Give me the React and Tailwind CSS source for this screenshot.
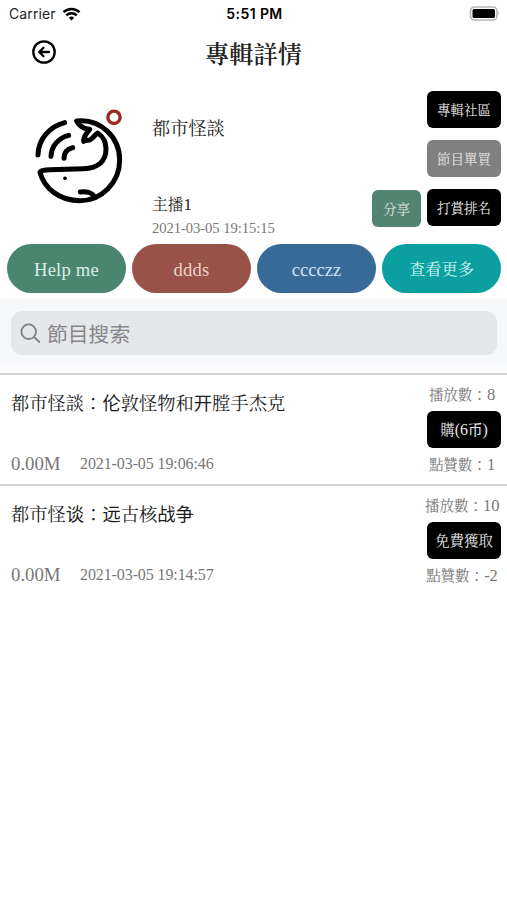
import React from 'react';

const serif = "font-['Liberation_Serif','Noto_Serif_CJK_TC','Noto_Sans_CJK_TC',serif]";

function StatusBar() {
  return (
    <div className="flex h-[27px] items-center justify-between pl-[9px] pr-[7px] font-['Inter','Liberation_Sans',sans-serif] text-black">
      <div className="flex w-[120px] items-center gap-[6px] text-[14px] font-normal tracking-[0.1px] text-[#222]">
        <span>Carrier</span>
        <svg width="19" height="14" viewBox="0 0 18 14" fill="none" stroke="#000" strokeWidth="2.5">
          <path d="M1 5.2a11.4 11.4 0 0 1 16 0" />
          <path d="M3.8 8.4a7.4 7.4 0 0 1 10.4 0" />
          <path d="M9 13.5 6.3 10.7a4 4 0 0 1 5.4 0z" fill="#000" stroke="none" />
        </svg>
      </div>
      <div className="text-[14px] font-semibold tracking-[0.4px]">5:51 PM</div>
      <div className="flex w-[120px] justify-end">
        <svg width="31" height="15" viewBox="0 0 31 15">
          <rect x="1.5" y="1" width="26.5" height="13" rx="4" fill="#fff" stroke="#b5b5b5" strokeWidth="1.6" />
          <rect x="3.5" y="3" width="22.5" height="9" rx="1.5" fill="#000" />
          <path d="M29.2 5.3q1.8 2 0 4z" fill="#b5b5b5" />
        </svg>
      </div>
    </div>
  );
}

function Logo() {
  return (
    <svg className="h-[120px] w-[120px] shrink-0" viewBox="0 0 360 360" fill="none" stroke="#000" strokeWidth="15" strokeLinecap="round" strokeLinejoin="round">
      <path d="M170 78C243 70 299 128 299 195C299 262 245 317 180 317C119 317 73 281 60 232C62 226 75 225 90 224L190 221C237 220 258 196 258 162C258 142 249 124 233 114C226 117 222 128 211 134C205 137 198 134 191 139C190 122 202 113 209 103C192 102 178 93 170 78Z" />
      <path d="M54 180C55 132 90 94 134 83" />
      <path d="M93 184C94 152 116 129 146 121" />
      <path d="M132 190C132 173 143 162 158 158" />
      <path d="M181 291C199 288 216 293 222 303" />
      <circle cx="135" cy="250" r="5.5" fill="#000" stroke="none" />
      <circle cx="282" cy="67" r="18.5" stroke="#9a2a20" strokeWidth="10" />
    </svg>
  );
}

function Button({ children, className = 'w-[74px] bg-black pt-[4px] text-[13.5px]' }) {
  return (
    <div className={`flex h-[37px] items-center justify-center rounded-[6px] text-[#e6e6e6] ${className}`}>
      {children}
    </div>
  );
}

function Pill({ children, className }) {
  return (
    <div className={`flex h-[49px] flex-1 items-center justify-center rounded-full ${className}`}>{children}</div>
  );
}

// Simplified-only characters fall back to a sans face.
function Sans({ children }) {
  return <span className="font-['Noto_Sans_CJK_SC',sans-serif]">{children}</span>;
}

function Row({ title, date, plays, action, likes }) {
  return (
    <div className="flex h-[111px] justify-between border-t-2 border-[#d2d3d5] pl-[11px] pr-[6px]">
      <div className="flex flex-col justify-between pb-[8px] pt-[13px]">
        <div className="text-[18.3px] leading-[28px] text-[#1c1c1c]">{title}</div>
        <div className="flex items-center leading-[24px] text-[#777]">
          <span className="w-[69px] text-[18.8px]">0.00M</span>
          <span className="text-[16px] tracking-[-0.1px]">{date}</span>
        </div>
      </div>
      <div className="flex w-[76px] flex-col items-end whitespace-nowrap pt-[10px] text-[14.5px] leading-[20px] text-[#777]">
        <div className="h-[20px] w-full pr-[2px] text-center">播放數：<span className="text-[16.5px]">{plays}</span></div>
        <Button className="mb-[7px] mt-[6px] w-[74px] shrink-0 bg-black text-[14.5px]">{action}</Button>
        <div className="h-[20px] w-full pr-[2px] text-center">點贊數：<span className="text-[16.5px]">{likes}</span></div>
      </div>
    </div>
  );
}

export default function App() {
  return (
    <div className={`h-[900px] w-[507px] overflow-hidden bg-white font-normal ${serif}`}>
      <StatusBar />
      <header className="grid h-[52px] grid-cols-[80px_1fr_80px] items-center">
        <svg className="ml-[31px] -mt-[2px]" width="26" height="26" viewBox="0 0 26 26" fill="none" stroke="#000" strokeWidth="2.3" strokeLinecap="round" strokeLinejoin="round">
          <circle cx="13" cy="13" r="10.7" />
          <path d="M18 13H8.5M12.5 8.7 8.2 13l4.3 4.3" />
        </svg>
        <h1 className="pt-[4px] text-center text-[24.3px] font-semibold text-[#222]">專輯詳情</h1>
      </header>

      <section className="flex h-[165px] pl-[20px] pr-[6px] pt-[12px]">
        <div className="pt-[4px]">
          <Logo />
        </div>
        <div className="flex flex-1 flex-col pl-[12px] pt-[24px] text-[#222]">
          <div className="h-[28px] text-[18.2px] leading-[28px]">都市怪談</div>
          <div className="mt-[50px] h-[24px] text-[15.7px] leading-[24px]">主播<span className="text-[17px]">1</span></div>
          <div className="text-[14.6px] leading-[22px] tracking-[-0.05px] text-[#777]">2021-03-05 19:15:15</div>
        </div>
        <div className="flex items-end gap-[6px] pb-[18px]">
          <Button className="-mb-px w-[49px] bg-[#538471] pt-[4px] text-[13.5px]">分享</Button>
          <div className="flex flex-col gap-[12px]">
            <Button>專輯社區</Button>
            <Button className="w-[74px] bg-[#808080] pt-[4px] text-[13.5px]">節目單買</Button>
            <Button>打賞排名</Button>
          </div>
        </div>
      </section>

      <nav className="flex gap-[6px] pl-[7px] pr-[6px] text-[18.6px]">
        <Pill className="bg-[#4a8570] pt-[2px] tracking-[0.2px] text-[#d8eee5]">Help me</Pill>
        <Pill className="bg-[#985248] pt-[2px] tracking-[0.2px] text-[#f0d3cb]">ddds</Pill>
        <Pill className="bg-[#386a98] pt-[2px] text-[#cfe4f5]">cccczz</Pill>
        <Pill className="bg-[#0b9fa0] pt-[4px] text-[16.2px] text-[#d2f6f3]">查看更多</Pill>
      </nav>

      <div className="mt-[6px] h-[74px] bg-gradient-to-b from-[#f7f8fa] from-85% to-[#fdfdfe] pl-[11px] pr-[10px] pt-[12px]">
        <div className="flex h-[44px] items-center rounded-[11px] bg-[#e6e7e9] pl-[9px] pt-px font-['Noto_Sans_CJK_TC',sans-serif] text-[20.8px] text-[#85868a]">
          <svg className="mr-[6px]" width="21" height="21" viewBox="0 0 21 21" fill="none" stroke="#808186" strokeWidth="1.8" strokeLinecap="round">
            <circle cx="8.7" cy="8.7" r="7.3" />
            <path d="m14 14 5.4 5" />
          </svg>
          節目搜索
        </div>
      </div>

      <Row
        title={<>都市怪談：<Sans>伦</Sans>敦怪物和<Sans>开</Sans>膛手杰克</>}
        date="2021-03-05 19:06:46"
        plays="8"
        action={<span>購<span className="text-[16px]">(6</span><Sans>币</Sans><span className="text-[16px]">)</span></span>}
        likes="1"
      />
      <Row
        title={<>都市怪<Sans>谈</Sans>：<Sans>远</Sans>古核<Sans>战争</Sans></>}
        date="2021-03-05 19:14:57"
        plays="10"
        action="免費獲取"
        likes="-2"
      />
    </div>
  );
}
